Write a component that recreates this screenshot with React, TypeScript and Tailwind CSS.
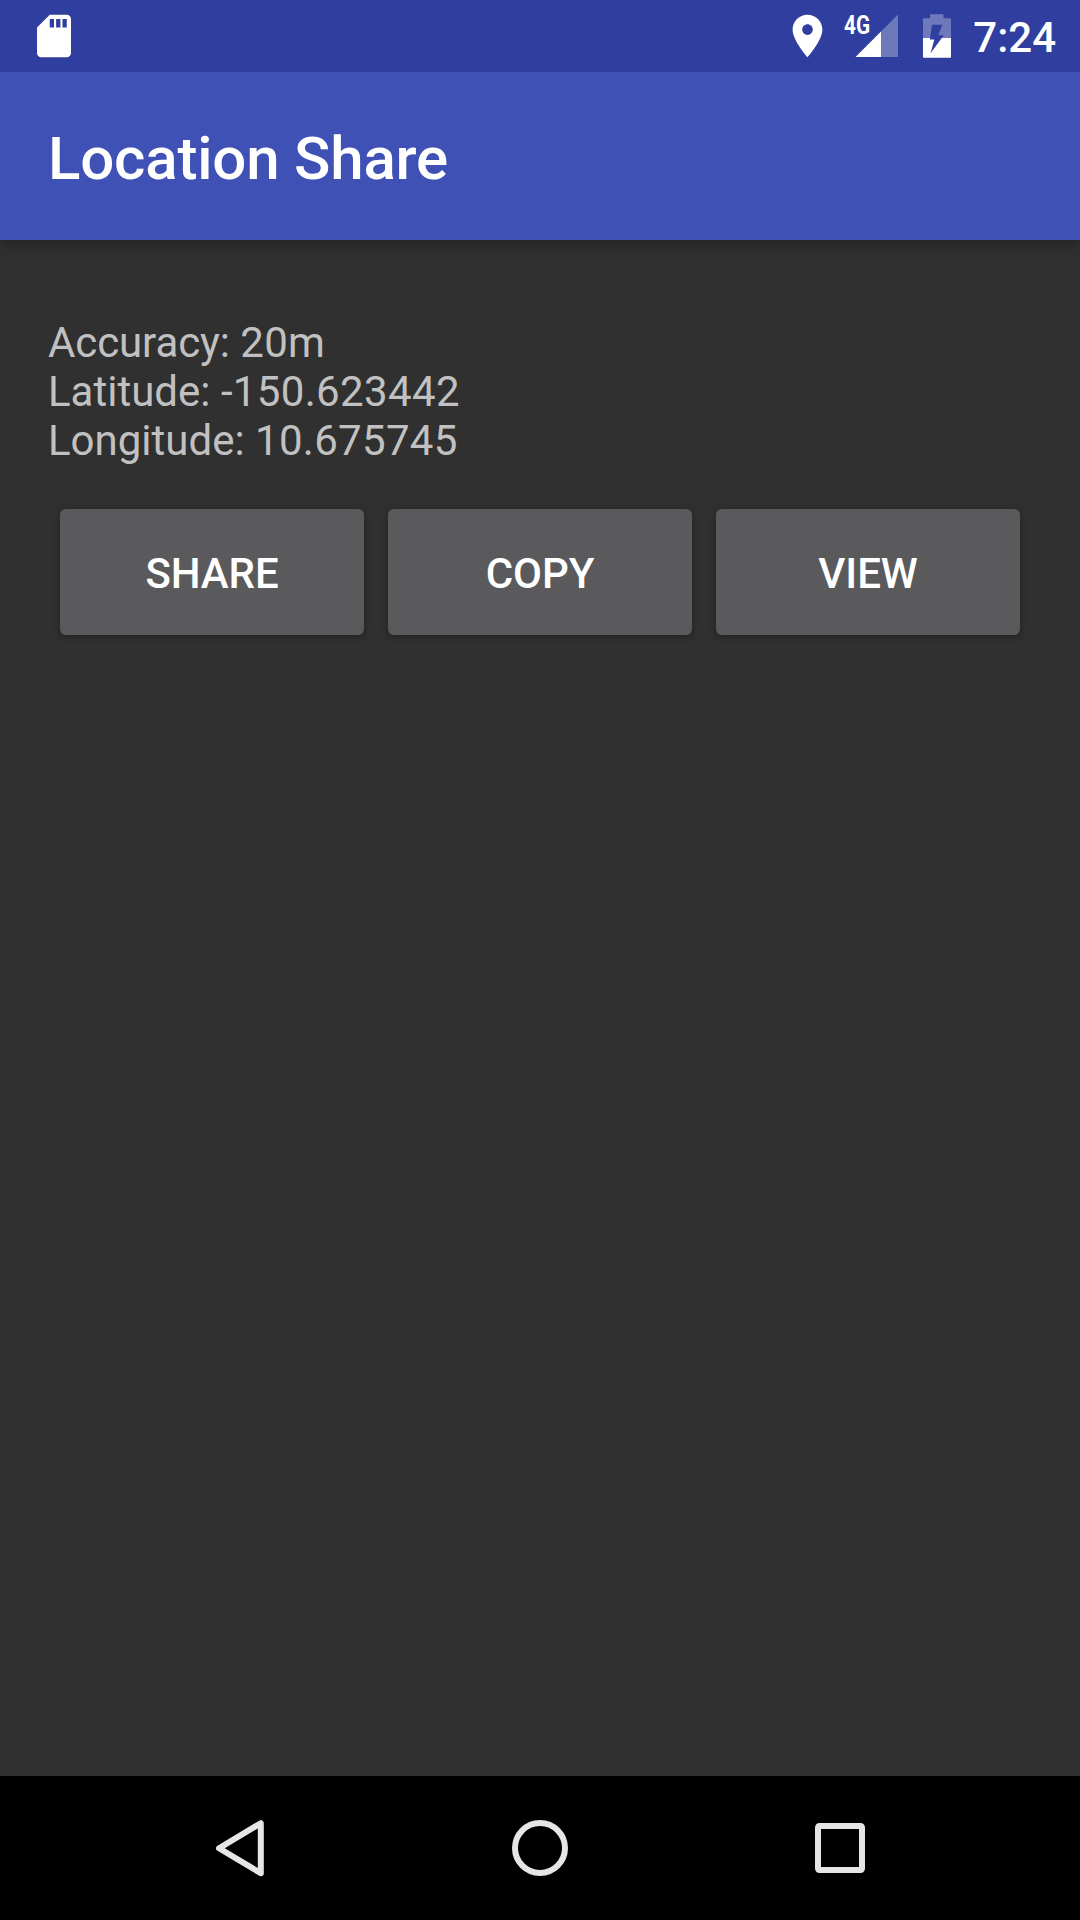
import React from "react";

function SdCardIcon() {
  return (
    <svg width="52" height="52" viewBox="-0.235 -0.235 24.47 24.47" fill="#fff">
      <path d="M18 2h-8L4.02 8 4 20c0 1.1.9 2 2 2h12c1.1 0 2-.9 2-2V4c0-1.1-.9-2-2-2zm-6 6h-2V4h2v4zm3 0h-2V4h2v4zm3 0h-2V4h2v4z" />
    </svg>
  );
}

function PinIcon() {
  return (
    <svg width="52" height="52" viewBox="0 -0.235 24.47 24.47" fill="#fff">
      <path d="M12 2C8.13 2 5 5.13 5 9c0 5.25 7 13 7 13s7-7.75 7-13c0-3.87-3.13-7-7-7zm0 9.5c-1.38 0-2.5-1.12-2.5-2.5s1.12-2.5 2.5-2.5 2.5 1.12 2.5 2.5-1.12 2.5-2.5 2.5z" />
    </svg>
  );
}

function SignalIcon() {
  return (
    <svg width="43" height="44" viewBox="-0.5 -0.5 43 44" fill="#fff">
      <path fillOpacity="0.3" d="M25.5 17 42.5 0V42.5H25.5z" />
      <path d="M0 42.5 25.5 17V42.5z" />
    </svg>
  );
}

function BatteryIcon() {
  return (
    <svg width="28" height="44" viewBox="0 0 28 44" fill="#fff">
      <path fillOpacity="0.3" d="M7 0.3h13.5v4H27.2c.5 0 .8.4.8.8V24H0V5.1C0 4.6.3 4.3.8 4.3H7z" />
      <path d="M0 24H28V43c0 .5-.3.8-.8.8H.8C.3 43.8 0 43.4 0 43z" />
      <path fill="#303f9f" d="M9 10.7H19.3L15.3 21.2H20.8L7.6 39.2 11.3 25.5H6.8z" />
    </svg>
  );
}

function StatusBar() {
  return (
    <header className="relative z-10 flex h-[72px] items-start bg-[#303f9f] pl-[28px] pr-[24px] text-white">
      <div className="mt-[10px]">
        <SdCardIcon />
      </div>
      <div className="ml-auto mt-[10px]">
        <PinIcon />
      </div>
      <div className="relative ml-[21px] mt-[14px]">
        <SignalIcon />
        <span className="absolute -left-[11px] -top-[3px] origin-left scale-x-[0.83] text-[25px] font-bold leading-[29px]">
          4G
        </span>
      </div>
      <div className="ml-[25px] mt-[14px]">
        <BatteryIcon />
      </div>
      <span className="ml-[21px] mt-[13px] w-[84px] whitespace-nowrap text-right text-[42px] font-medium leading-[49px]">
        7:24
      </span>
    </header>
  );
}

const readings = [
  { label: "Accuracy:", value: "20m", labelClass: "tracking-[-0.1px]", valueClass: "tracking-[0.3px]" },
  { label: "Latitude:", value: "-150.623442", labelClass: "", valueClass: "tracking-[0.35px]" },
  { label: "Longitude:", value: "10.675745", labelClass: "", valueClass: "tracking-[0.3px]" },
];
const actions = ["SHARE", "COPY", "VIEW"];

export default function App() {
  return (
    <div className="flex h-[1920px] w-[1080px] flex-col overflow-hidden bg-[#303030] font-['Roboto',sans-serif]">
      <StatusBar />
      <div className="flex h-[168px] items-center bg-[#3f51b5] px-[48px] shadow-[0_4px_12px_rgba(0,0,0,0.3)]">
        <h1 className="mt-[6px] text-[60px] font-medium leading-[70px] tracking-[-0.18px] text-white">Location Share</h1>
      </div>
      <main className="flex-1 px-[48px] pt-[78px]">
        <div className="text-[42px] leading-[49px] text-[#c1c1c1]">
          {readings.map(({ label, value, labelClass, valueClass }) => (
            <p key={label}>
              <span className={labelClass}>{label} </span>
              <span className={valueClass}>{value}</span>
            </p>
          ))}
        </div>
        <div className="mt-[44px] grid grid-cols-3 gap-[24px] px-[12px]">
          {actions.map((label) => (
            <button
              key={label}
              className="h-[126px] rounded-[6px] bg-[#5a5a5c] pt-[2px] text-[42px] font-medium leading-[49px] tracking-[-0.1px] text-white shadow-[0_2px_7px_rgba(0,0,0,0.3)]"
            >
              {label}
            </button>
          ))}
        </div>
      </main>
      <nav className="flex h-[144px] items-center justify-center gap-[200px] bg-black">
        <svg width="100" height="100" viewBox="0 0 100 100" fill="none" stroke="#e6e6e6" strokeWidth="6" strokeLinejoin="round">
          <path d="M29 50.2 70.8 25.2V75.2z" />
        </svg>
        <svg width="100" height="100" viewBox="0 0 100 100" fill="none" stroke="#e6e6e6" strokeWidth="6">
          <circle cx="50" cy="50" r="25" />
        </svg>
        <svg width="100" height="100" viewBox="0 0 100 100" fill="none" stroke="#e6e6e6" strokeWidth="6">
          <rect x="28" y="28" width="44" height="44" rx="1.5" />
        </svg>
      </nav>
    </div>
  );
}
